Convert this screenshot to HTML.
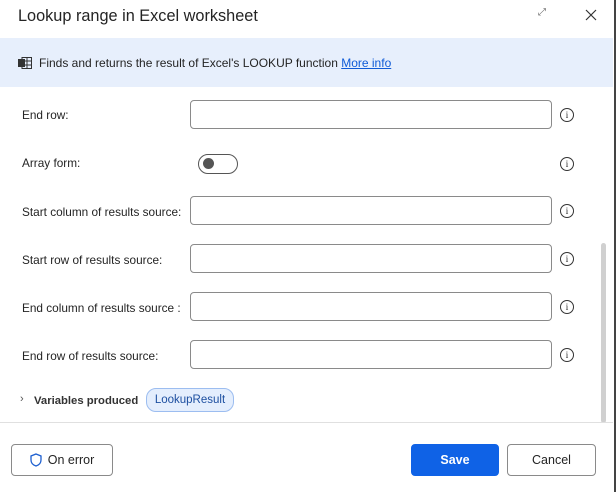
<html><head><style>
body{margin:0;width:616px;height:492px;background:#fff;font-family:"Liberation Sans",sans-serif;position:relative;overflow:hidden;color:#242424}
.a{position:absolute}
.lbl{position:absolute;left:22px;font-size:11.8px}
.inp{position:absolute;left:190px;width:360px;height:27px;border:1px solid #8a8a8a;border-radius:4px}
.info{position:absolute;left:560px;width:12px;height:12px;border:1px solid #333;border-radius:50%;font-size:9px;text-align:center;line-height:12px;font-family:"Liberation Serif",serif}
.btn{position:absolute;top:444px;border:1px solid #8a8a8a;border-radius:4px;font-size:12.5px;text-align:center;line-height:30px;box-sizing:border-box;height:32px}
</style></head><body>
<div class="a" style="left:18px;top:7px;font-size:16.3px;color:#242424">Lookup range in Excel worksheet</div>
<div class="a" style="left:538px;top:7px;font-size:10px;color:#666">⤢</div>
<svg class="a" style="left:585px;top:9px" width="12" height="12"><path d="M1 1L11 11M11 1L1 11" stroke="#333" stroke-width="1.2"/></svg>
<div class="a" style="left:0;top:38px;width:613px;height:49px;background:#e7effc"></div>
<svg class="a" style="left:18px;top:57px" width="14" height="12"><rect x="4" y="0.5" width="9.5" height="11" fill="none" stroke="#333"/><path d="M4 4H14M4 8H14M9 0V12" stroke="#333"/><rect x="0" y="2" width="7" height="8" fill="#333"/></svg>
<div class="a" style="left:39px;top:56px;font-size:12px">Finds and returns the result of Excel's LOOKUP function <span style="color:#0f5bd7;text-decoration:underline">More info</span></div>
<div class="lbl" style="top:108px">End row:</div><div class="inp" style="top:100px"></div><div class="info" style="top:108px">i</div>
<div class="lbl" style="top:156px">Array form:</div>
<div class="a" style="left:198px;top:154px;width:38px;height:18px;border:1px solid #555;border-radius:10px"></div>
<div class="a" style="left:203px;top:158px;width:11px;height:11px;border-radius:50%;background:#555"></div>
<div class="info" style="top:157px">i</div>
<div class="lbl" style="top:205px">Start column of results source:</div><div class="inp" style="top:196px"></div><div class="info" style="top:204px">i</div>
<div class="lbl" style="top:253px">Start row of results source:</div><div class="inp" style="top:244px"></div><div class="info" style="top:252px">i</div>
<div class="lbl" style="top:301px">End column of results source :</div><div class="inp" style="top:292px"></div><div class="info" style="top:300px">i</div>
<div class="lbl" style="top:349px">End row of results source:</div><div class="inp" style="top:340px"></div><div class="info" style="top:348px">i</div>
<div class="a" style="left:20px;top:393px;font-size:11px;color:#555">›</div>
<div class="a" style="left:34px;top:395px;font-size:11.3px;font-weight:bold;color:#333">Variables produced</div>
<div class="a" style="left:146px;top:388px;width:86px;height:22px;border:1px solid #9cbdf0;background:#e4eefd;border-radius:10px;font-size:11.5px;color:#1d4fa0;text-align:center;line-height:23px">LookupResult</div>
<div class="a" style="left:601px;top:243px;width:5px;height:180px;background:#d0d0d0;border-radius:3px"></div>
<div class="a" style="left:0;top:422px;width:613px;height:1px;background:#e0e0e0"></div>
<div class="a" style="left:614px;top:0;width:2px;height:492px;background:#444"></div>
<div class="btn" style="left:11px;width:102px"><svg style="vertical-align:-3px;margin-right:6px" width="12" height="14"><path d="M6 1L11 3V7C11 10 9 12 6 13C3 12 1 10 1 7V3Z" fill="none" stroke="#1d5fd0" stroke-width="1.3"/></svg>On error</div>
<div class="btn" style="left:411px;width:88px;background:#0f62e6;border-color:#0f62e6;color:#fff;font-weight:bold">Save</div>
<div class="btn" style="left:507px;width:89px">Cancel</div>
</body></html>
